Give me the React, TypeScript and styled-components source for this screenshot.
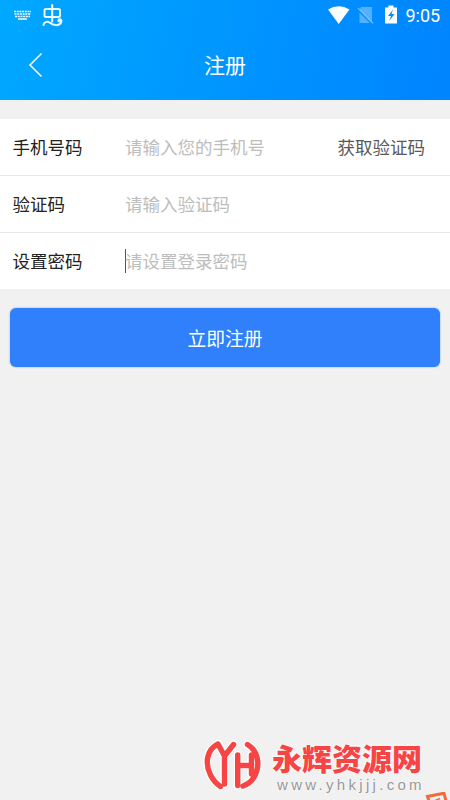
import React from "react";
import styled, { createGlobalStyle } from "styled-components";

const GlobalStyle = createGlobalStyle`
  * { box-sizing: border-box; }
  body { margin: 0; background: #f1f1f1; overflow: hidden; }
`;

const Screen = styled.div`
  position: relative;
  width: 450px;
  height: 800px;
  overflow: hidden;
  background: #f1f1f1;
  font-family: "Noto Sans CJK SC", sans-serif;
`;

const Header = styled.header`
  height: 100px;
  background: linear-gradient(102deg, #00a8ff 0%, #0084ff 100%);
  color: #fff;
`;

const StatusBar = styled.div`
  display: flex;
  justify-content: space-between;
  height: 30px;
`;

const StatusIcons = styled.svg`
  display: block;
  flex: none;
`;

const StatusRight = styled.div`
  display: flex;
`;

const Clock = styled.span`
  width: 45px;
  padding-left: 0.5px;
  font: 400 18px/32px Roboto, sans-serif;
  color: #fff;
`;

const TitleBar = styled.div`
  display: grid;
  grid-template-columns: 70px 1fr 70px;
  height: 70px;
`;

const BackButton = styled.button`
  padding: 0;
  border: 0;
  background: none;
  svg { display: block; }
`;

const Title = styled.h1`
  margin: 0;
  text-align: center;
  font-size: 21px;
  font-weight: 400;
  line-height: 68px;
`;

const Form = styled.main`
  padding-top: 19px;
`;

const Row = styled.label`
  display: grid;
  grid-template-columns: 112.5px 1fr auto;
  align-items: center;
  height: 57px;
  padding: 0 25px 1px 12.5px;
  background: #fff;
  border-bottom: 1px solid #e6e6e6;
  font-size: 17.5px;
  line-height: 24px;
  color: #222;
  &:last-of-type { border-bottom-color: #f1f1f1; }
`;

const Placeholder = styled.span<{ $focused?: boolean }>`
  color: #bdbdbd;
  box-shadow: ${(p) => (p.$focused ? "inset 1px 0 #555" : "none")};
`;

const CodeLink = styled.span`
  color: #595959;
`;

const Submit = styled.button`
  display: block;
  width: 430px;
  height: 59.5px;
  margin: 17.8px 10px 0;
  padding: 0;
  border: 0;
  border-radius: 6px;
  background: #2f80fa;
  box-shadow: 0 0 2px #74a8f0;
  color: #fff;
  font: 400 18.8px/59px "Noto Sans CJK SC", sans-serif;
`;

const Watermark = styled.div`
  position: absolute;
  left: 201px;
  top: 736px;
  display: flex;
  width: 249px;
  height: 64px;
`;

const BrandText = styled.div`
  display: flex;
  flex-direction: column;
  padding-left: 5px;
  white-space: nowrap;
`;

const BrandName = styled.span`
  height: 41px;
  font-size: 30px;
  font-weight: 900;
  line-height: 41px;
  margin-top: 1px;
  color: #f74445;
  text-shadow: 0 0 2px #fff, 0 0 3px #fff;
`;

const BrandUrl = styled.span`
  padding-left: 5px;
  font: 15px/15px "Liberation Sans", sans-serif;
  letter-spacing: 3.3px;
  color: #999;
  text-shadow: 0 0 2px #fff;
  margin-top: -1px;
`;

const CornerMark = styled.svg`
  position: absolute;
  right: 0;
  bottom: 0;
`;

const fields = [
  { label: "手机号码", hint: "请输入您的手机号", action: "获取验证码" },
  { label: "验证码", hint: "请输入验证码" },
  { label: "设置密码", hint: "请设置登录密码", focused: true },
];

export default function App() {
  return (
    <Screen>
      <GlobalStyle />
      <Header>
        <StatusBar>
          <StatusIcons width="70" height="30" fill="none" stroke="#effbff">
            <path d="M14 11.5H31M14.5 14H31M15 16.5H30" strokeWidth="1.7" strokeDasharray="2 .7" />
            <path d="M18 19H27" strokeWidth="1.5" />
            <path d="M46 9H58.5Q60 9 60 10.5V15.5Q60 17 58.5 17H46Q44.5 17 44.5 15.5V10.5Q44.5 9 46 9ZM52.2 5V21.5M43.5 25C44.5 21.5 47.5 20.8 50 22.8C53 25.5 58 26 60.5 23.5C62.5 21 61 18.5 59 19.5" strokeWidth="2" strokeLinecap="round" strokeLinejoin="round" />
            <circle cx="59.2" cy="20.6" r="1.4" fill="#effbff" />
          </StatusIcons>
          <StatusRight>
            <StatusIcons width="80" height="30" fill="#fff">
              <path d="M3 9.5Q13.7 3 24.5 9.5L13.7 24Z" />
              <path d="M36 7H47V22.5L34.5 10ZM34.5 12.5L45 23H34.5Z" opacity=".32" />
              <path d="M33 8L48 23.5" stroke="#9cd2ff" strokeWidth="1.2" opacity=".65" />
              <path d="M60 7.5H63.3V5.5H68.5V7.5H72V23.5H60Z" />
              <path d="M68 9.5L63 16H66L64.3 21L69.5 14H66.5Z" fill="#078cff" />
            </StatusIcons>
            <Clock>9:05</Clock>
          </StatusRight>
        </StatusBar>
        <TitleBar>
          <BackButton aria-label="返回">
            <svg width="70" height="70" fill="none" stroke="#fff" strokeWidth="1.5">
              <path d="M41.5 23.5L30 35L41.5 46.5" />
            </svg>
          </BackButton>
          <Title>注册</Title>
        </TitleBar>
      </Header>
      <Form>
        {fields.map((f) => (
          <Row key={f.label}>
            <span>{f.label}</span>
            <Placeholder $focused={f.focused}>{f.hint}</Placeholder>
            {f.action && <CodeLink>{f.action}</CodeLink>}
          </Row>
        ))}
        <Submit>立即注册</Submit>
      </Form>
      <Watermark>
        <svg width="66" height="60" fill="none" strokeLinecap="round" strokeLinejoin="round">
          {[
            { color: "#fff", width: 8 },
            { color: "#f74445", width: 5.4 },
          ].map((s) => (
            <path
              key={s.color}
              stroke={s.color}
              strokeWidth={s.width}
              d="M17 8C5 14 4 28 9.5 39C12 44 15 47.5 19.5 50.5M17 8L23.5 20L32.5 8.5M23.5 20V48M46.5 8.5C59 16 59 32 52.5 42C50 46 46 48.5 42 50M36.7 19V49.5M37 29.5H50.5M50.5 19V38"
            />
          ))}
        </svg>
        <BrandText>
          <BrandName>永辉资源网</BrandName>
          <BrandUrl>www.yhkjjj.com</BrandUrl>
        </BrandText>
      </Watermark>
      <CornerMark width="26" height="8" fill="none" stroke="#f26a3d" strokeWidth="3">
        <path d="M5 9L3.5 4.5L20 1.2L22 9" />
        <path d="M10 9L16 6.5" strokeWidth="1.5" />
      </CornerMark>
    </Screen>
  );
}
